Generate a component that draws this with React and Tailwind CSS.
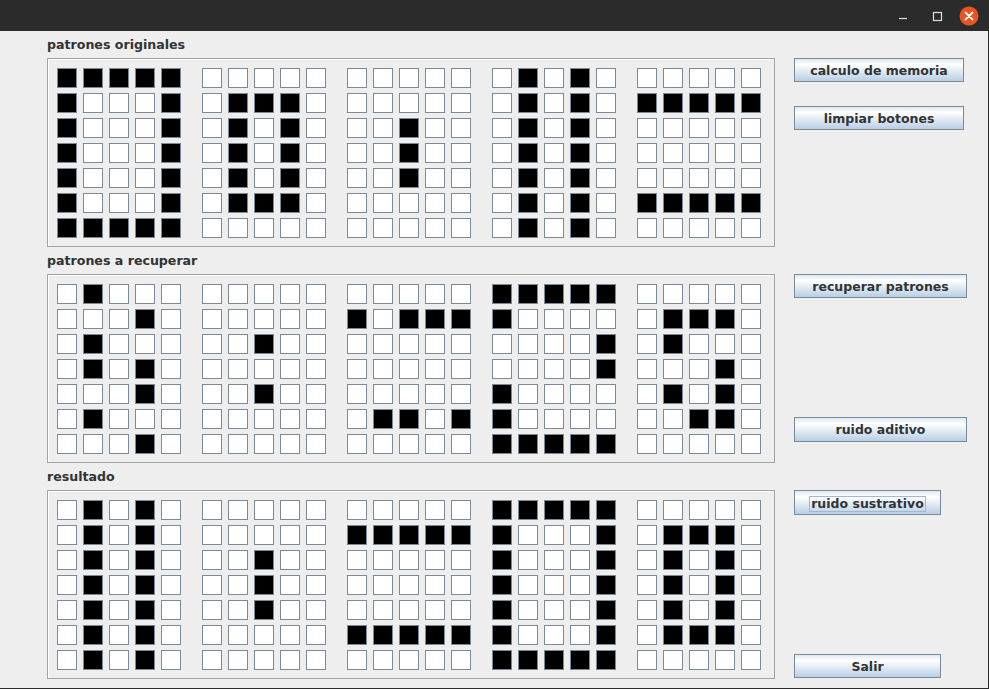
const originales = [
  ['11111', '10001', '10001', '10001', '10001', '10001', '11111'],
  ['00000', '01110', '01010', '01010', '01010', '01110', '00000'],
  ['00000', '00000', '00100', '00100', '00100', '00000', '00000'],
  ['01010', '01010', '01010', '01010', '01010', '01010', '01010'],
  ['00000', '11111', '00000', '00000', '00000', '11111', '00000'],
];

const recuperar = [
  ['01000', '00010', '01000', '01010', '00010', '01000', '00010'],
  ['00000', '00000', '00100', '00000', '00100', '00000', '00000'],
  ['00000', '10111', '00000', '00000', '00000', '01101', '00000'],
  ['11111', '10000', '00001', '00001', '10000', '10000', '11111'],
  ['00000', '01110', '01000', '00010', '01010', '00110', '00000'],
];

const resultado = [
  ['01010', '01010', '01010', '01010', '01010', '01010', '01010'],
  ['00000', '00000', '00100', '00100', '00100', '00000', '00000'],
  ['00000', '11111', '00000', '00000', '00000', '11111', '00000'],
  ['11111', '10001', '10001', '10001', '10001', '10001', '11111'],
  ['00000', '01110', '01010', '01010', '01010', '01110', '00000'],
];

const font = { fontFamily: '"DejaVu Sans", sans-serif' };

function Group({ rows }) {
  return (
    <div className="flex flex-col gap-[5px]">
      {rows.map((row, r) => (
        <div key={r} className="flex gap-[6px]">
          {row.split('').map((c, i) => (
            <div
              key={i}
              className={`w-[20px] h-[20px] border border-[#7a8a99] ${c === '1' ? 'bg-black' : 'bg-white'}`}
            />
          ))}
        </div>
      ))}
    </div>
  );
}

function Section({ label, groups }) {
  return (
    <div className="flex flex-col">
      <div className="h-[16px] mb-[5px] text-[12.6px] leading-[16px] font-bold text-[#333333]">{label}</div>
      <div className="w-[728px] h-[189px] border border-[#a3a3a3]">
        <div className="w-full h-full border-l border-t border-white pl-[8px] pt-[8px] flex gap-[21px]">
          {groups.map((g, i) => (
            <Group key={i} rows={g} />
          ))}
        </div>
      </div>
    </div>
  );
}

function Boton({ children, className = '', focus = false }) {
  return (
    <div
      className={`h-[24px] pt-[2px] border border-[#7a8a99] bg-gradient-to-b from-[#dde8f3] via-white via-[25%] to-[#b8cfe5] flex items-center justify-center text-[12.5px] font-bold text-[#333333] ${className}`}
    >
      <span className={focus ? 'border border-[#a3b8cc] px-[1px] leading-[14px]' : ''}>{children}</span>
    </div>
  );
}

export default function App() {
  return (
    <div className="w-[989px] h-[689px] bg-[#eeeeee] flex flex-col border-r border-b border-[#2b2b2b] overflow-hidden" style={font}>
      {/* title bar */}
      <div className="h-[31px] bg-[#2b2b2b] shrink-0 flex items-center justify-end">
        <svg width="16" height="16" viewBox="0 0 16 16" className="mr-[18px]">
          <path d="M4 10.5h8" stroke="#e0e0e0" strokeWidth="1.2" />
        </svg>
        <svg width="16" height="16" viewBox="0 0 16 16" className="mr-[14px]">
          <rect x="4.5" y="4.5" width="8" height="8" fill="none" stroke="#e0e0e0" strokeWidth="1.2" />
        </svg>
        <svg width="20" height="20" viewBox="0 0 20 20" className="mr-[9px]">
          <circle cx="10" cy="10" r="9.5" fill="#e95420" />
          <path d="M6.5 6.5l7 7M13.5 6.5l-7 7" stroke="white" strokeWidth="1.8" strokeLinecap="round" />
        </svg>
      </div>

      <div className="flex pl-[47px]">
        <div className="flex flex-col gap-[6px] pt-[6px]">
          <Section label="patrones originales" groups={originales} />
          <Section label="patrones a recuperar" groups={recuperar} />
          <Section label="resultado" groups={resultado} />
        </div>

        <div className="flex flex-col ml-[19px]">
          <Boton className="w-[170px] mt-[27px]">calculo de memoria</Boton>
          <Boton className="w-[170px] mt-[24px]">limpiar botones</Boton>
          <Boton className="w-[173px] mt-[144px]">recuperar patrones</Boton>
          <Boton className="w-[173px] mt-[119px] h-[25px]">ruido aditivo</Boton>
          <Boton className="w-[147px] mt-[48px] h-[25px]" focus>ruido sustrativo</Boton>
          <Boton className="w-[147px] mt-[139px]">Salir</Boton>
        </div>
      </div>
    </div>
  );
}
